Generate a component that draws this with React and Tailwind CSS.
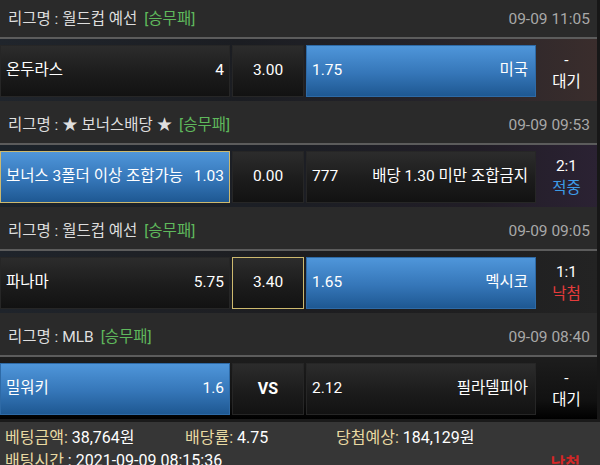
import React from "react";

const font = { fontFamily: 'Roboto, "Noto Sans CJK KR", "Noto Sans", sans-serif' };

function Header({ league, time, first }) {
  return (
    <div
      className={
        "flex items-center justify-between bg-[#2a2a2a] pl-[8px] pr-[7px] text-[15.5px] " +
        (first ? "h-[37px] pt-[3px]" : "h-[42px] pt-[8px]")
      }
    >
      <div className="text-[#dedede] whitespace-nowrap">
        리그명 : {league} <span className="ml-[3px] text-[#5fb85c]">[승무패]</span>
      </div>
      <div className="text-[#a8a8a8]">{time}</div>
    </div>
  );
}

function Box({ variant, selected, className = "", children }) {
  const base =
    variant === "blue"
      ? "bg-[linear-gradient(to_bottom,#4f96da,#3576b8_55%,#1e5892)]"
      : "bg-[linear-gradient(to_bottom,#2c2c2c,#1c1c1c_55%,#121212)]";
  const border = selected
    ? "border border-[#cdb96e]"
    : variant === "blue"
    ? "border border-[#2e6aa6]"
    : "border border-[#262626]";
  return (
    <div className={`flex h-[52px] items-center text-[15.5px] text-white ${base} ${border} ${className}`}>
      {children}
    </div>
  );
}

function Status({ top, bottom, color }) {
  return (
    <div className="flex w-[61px] flex-col items-center justify-center leading-[22px] text-[15.5px]">
      <div className="text-white">{top}</div>
      <div className={color}>{bottom}</div>
    </div>
  );
}

function Match({ bg, left, mid, right, status }) {
  return (
    <div className="border-t-2 border-[#5c5c5c]">
      <div className={`flex pt-[6px] pb-[4px] ${bg}`}>
        <Box variant={left.v} selected={left.sel} className="w-[230px] justify-between pl-[5px] pr-[5px]">
          <span>{left.name}</span>
          <span>{left.odd}</span>
        </Box>
        <Box variant={mid.v} selected={mid.sel} className="ml-[2px] w-[72px] justify-center">
          <span className={mid.bold ? "font-bold text-[16px]" : ""}>{mid.text}</span>
        </Box>
        <Box variant={right.v} selected={right.sel} className="ml-[2px] w-[230px] justify-between pl-[5px] pr-[7px]">
          <span>{right.odd}</span>
          <span>{right.name}</span>
        </Box>
        <Status {...status} />
      </div>
    </div>
  );
}

function Section({ header, match }) {
  return (
    <div className="border-r-[3px] border-[#171717]">
      <Header {...header} />
      <Match {...match} />
    </div>
  );
}

export default function App() {
  return (
    <div className="h-[465px] w-[600px] overflow-hidden bg-[#1a1a1a]" style={font}>
      <Section
        header={{ league: "월드컵 예선", time: "09-09 11:05", first: true }}
        match={{
          bg: "bg-[linear-gradient(to_right,#20252c,#1b1d22_40%,#24232a_70%,#3a2d2c)]",
          left: { v: "dark", name: "온두라스", odd: "4" },
          mid: { v: "dark", text: "3.00" },
          right: { v: "blue", odd: "1.75", name: "미국" },
          status: { top: "-", bottom: "대기", color: "text-white" },
        }}
      />
      <Section
        header={{ league: "★ 보너스배당 ★", time: "09-09 09:53" }}
        match={{
          bg: "bg-[linear-gradient(to_right,#1c232a,#1c1e24_50%,#211d26_80%,#2b2233)]",
          left: { v: "blue", sel: true, name: "보너스 3폴더 이상 조합가능", odd: "1.03" },
          mid: { v: "dark", text: "0.00" },
          right: { v: "dark", odd: "777", name: "배당 1.30 미만 조합금지" },
          status: { top: "2:1", bottom: "적중", color: "text-[#3d9be6]" },
        }}
      />
      <Section
        header={{ league: "월드컵 예선", time: "09-09 09:05" }}
        match={{
          bg: "bg-[linear-gradient(to_right,#1f242b,#1d1d20_50%,#1f1f20_80%,#232323)]",
          left: { v: "dark", name: "파나마", odd: "5.75" },
          mid: { v: "dark", sel: true, text: "3.40" },
          right: { v: "blue", odd: "1.65", name: "멕시코" },
          status: { top: "1:1", bottom: "낙첨", color: "text-[#e53c3c]" },
        }}
      />
      <Section
        header={{ league: "MLB", time: "09-09 08:40" }}
        match={{
          bg: "bg-[linear-gradient(to_bottom,#1d1d1d,#111_70%,#000)]",
          left: { v: "blue", name: "밀워키", odd: "1.6" },
          mid: { v: "dark", bold: true, text: "VS" },
          right: { v: "dark", odd: "2.12", name: "필라델피아" },
          status: { top: "-", bottom: "대기", color: "text-white" },
        }}
      />
      <div className="mt-[3px] h-[50px] bg-[#363636] pl-[5px] pt-[4px] text-[16px] leading-[23px]">
        <div className="flex">
          <div className="w-[180px]">
            <span className="text-[#e8d9a2]">베팅금액:</span>
            <span className="text-white"> 38,764원</span>
          </div>
          <div className="w-[151px]">
            <span className="text-[#e8d9a2]">배당률:</span>
            <span className="text-white"> 4.75</span>
          </div>
          <div>
            <span className="text-[#e8d9a2]">당첨예상:</span>
            <span className="text-white"> 184,129원</span>
          </div>
        </div>
        <div className="flex justify-between pr-[20px]">
          <div>
            <span className="text-[#e8d9a2]">배팅시간</span>
            <span className="text-white"> : 2021-09-09 08:15:36</span>
          </div>
          <div className="pt-[3px] font-bold text-[#d32626]">낙첨</div>
        </div>
      </div>
    </div>
  );
}
